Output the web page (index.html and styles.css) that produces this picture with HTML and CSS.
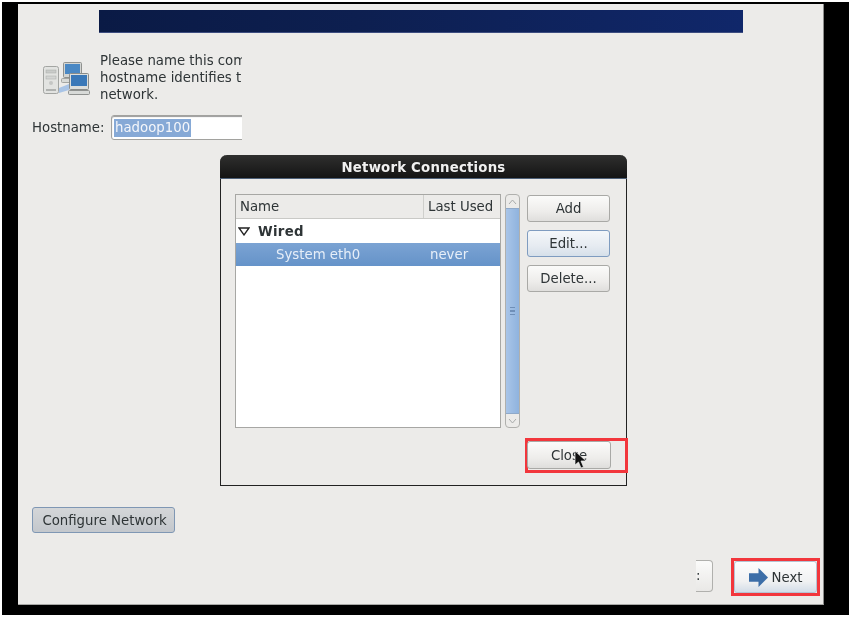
FILE: index.html
```html
<!DOCTYPE html>
<html lang="en">
<head>
    <meta charset="UTF-8">
    <title>Network Connections</title>
    <link rel="stylesheet" href="styles.css">
</head>
<body>
    <div class="frame">
        <div class="installer">
            <div class="banner"></div>

            <div class="clip-area">
                <div class="intro">
                    <svg class="net-icon" width="49" height="35" viewBox="0 0 49 35">
                        <rect x="1.500" y="5.500" width="15" height="27" rx="2" fill="#e2e3e1" stroke="#a3a5a2"/>
                        <rect x="4" y="9" width="10" height="3" fill="#c9cbc9" stroke="#a9aba9" stroke-width=".5"/>
                        <rect x="4" y="15" width="10" height="3" fill="#d3d5d3" stroke="#a9aba9" stroke-width=".5"/>
                        <circle cx="9" cy="22" r="2" fill="#c4c6c4"/>
                        <rect x="4" y="28" width="10" height="2" fill="#b0b2b0"/>
                        <path d="M17 27 L27 23 L27 29 L17 32 Z" fill="#a9c4e6"/>
                        <rect x="19.500" y="17.500" width="9" height="4" rx="1" fill="#d8dad8" stroke="#a3a5a2"/>
                        <rect x="21.500" y="1.500" width="18" height="15" rx="1" fill="#d3d5d3" stroke="#8f918f"/>
                        <rect x="23" y="3" width="15" height="10" fill="#4a88c4"/>
                        <rect x="27.500" y="12.500" width="19" height="16" rx="1" fill="#dcdedc" stroke="#8a8c8a"/>
                        <rect x="29" y="14" width="16" height="11" fill="#3a78b8"/>
                        <rect x="26.500" y="29.500" width="21" height="4" rx="1" fill="#d8dad8" stroke="#8f918f"/>
                    </svg>
                    <p class="intro-text">Please name this computer. The<br>hostname identifies this computer on a<br>network.</p>
                </div>
                <div class="host-row">
                    <label class="host-label">Hostname:</label>
                    <div class="host-input"><span class="host-value">hadoop100</span></div>
                </div>
            </div>

            <div class="spacer"></div>

            <button class="btn btn-config">Configure Network</button>

            <div class="nav-row">
                <div class="back-stub">:</div>
                <div class="mark mark-next">
                    <button class="btn btn-next">
                        <svg width="19" height="19" viewBox="0 0 20 20">
                            <path d="M0 5.500 H10 V0 L20 10 L10 20 V14.500 H0 Z" fill="#3c6ea8"/>
                        </svg>
                        Next
                    </button>
                </div>
            </div>
        </div>

        <div class="dialog">
            <div class="dialog-title">Network Connections</div>
            <div class="dialog-body">
                <div class="top-row">
                    <div class="tree">
                        <div class="tree-head">
                            <span class="col-name">Name</span>
                            <span class="col-used">Last Used</span>
                        </div>
                        <div class="tree-group">
                            <svg width="12" height="9" viewBox="0 0 12 9"><path d="M1 1 H11 L6 8 Z" fill="none" stroke="#222" stroke-width="1.300"/></svg>
                            <b class="group-name">Wired</b>
                        </div>
                        <div class="tree-row">
                            <span class="cell-name">System eth0</span>
                            <span class="cell-used">never</span>
                        </div>
                    </div>
                    <div class="scrollbar">
                        <div class="scroll-arrow">
                            <svg width="9" height="6" viewBox="0 0 9 6"><path d="M1 5 L4.500 1 L8 5" fill="none" stroke="#a9abab"/></svg>
                        </div>
                        <div class="scroll-thumb"><span class="grip"></span></div>
                        <div class="scroll-arrow">
                            <svg width="9" height="6" viewBox="0 0 9 6"><path d="M1 1 L4.500 5 L8 1" fill="none" stroke="#a9abab"/></svg>
                        </div>
                    </div>
                    <div class="side-buttons">
                        <button class="btn btn-side">Add</button>
                        <button class="btn btn-side btn-focus">Edit...</button>
                        <button class="btn btn-side">Delete...</button>
                    </div>
                </div>
                <div class="bottom-row">
                    <div class="mark mark-close">
                        <button class="btn btn-close">Close</button>
                    </div>
                </div>
            </div>
        </div>

        <svg class="cursor" width="13" height="19" viewBox="0 0 13 19">
            <path d="M1 0 L1 14 L4.500 11 L7 17 L9.500 16 L7 10 L12 10 Z" fill="#111" stroke="#eee" stroke-width=".7"/>
        </svg>
    </div>
</body>
</html>
```

FILE: styles.css
```css
html, body {
    margin: 0;
    padding: 0;
    background-color: #fff;
}
body {
    width: 851px;
    height: 618px;
    overflow: hidden;
    font-family: "DejaVu Sans", sans-serif;
    font-size: 13.3px;
    color: #2e3436;
}
/* the reference is a soft video frame */
.frame {
    position: relative;
    box-sizing: border-box;
    width: 847px;
    height: 613px;
    margin: 2px 0 0 2px;
    padding: 2px 25px 10px 16px;
    background-color: #000;
    filter: blur(.35px);
}
.installer {
    display: flex;
    flex-direction: column;
    height: 100%;
    background-color: #ecebe9;
    border-right: 1px solid #8d8d8b;
    border-bottom: 1px solid #a8a8a6;
    box-sizing: border-box;
}
.banner {
    width: 644px;
    height: 23px;
    margin: 6px 0 0 81px;
    background: linear-gradient(90deg, #0a1a45 0%, #0d1f50 40%, #10276a 100%);
    border-bottom: 1px solid #3d4d80;
    box-sizing: border-box;
}
.clip-area {
    width: 224px;
    overflow: hidden;
    margin-top: 19px;
}
.intro {
    display: flex;
    align-items: center;
    width: 500px;
    padding-left: 24px;
}
.net-icon {
    flex: none;
    margin: 2px 9px 0 0;
}
.intro-text {
    margin: 0;
    line-height: 17px;
    white-space: nowrap;
}
.host-row {
    display: flex;
    align-items: center;
    margin: 12px 0 0 14px;
}
.host-label {
    width: 79px;
    flex: none;
}
.host-input {
    flex: none;
    width: 160px;
    height: 25px;
    box-sizing: border-box;
    padding: 3px 0 0 2px;
    background-color: #fff;
    border: 1px solid #a2a29f;
    border-radius: 3px;
    box-shadow: inset 0 1px 1px #999;
}
.host-value {
    display: inline-block;
    padding: 0 1px;
    line-height: 18px;
    background-color: #86a9d6;
    color: #f4f6fa;
}
.spacer {
    flex: 1;
}
.btn {
    box-sizing: border-box;
    font-family: "DejaVu Sans", sans-serif;
    font-size: 13.3px;
    color: #2e3436;
    background: linear-gradient(180deg, #fbfbfa 0%, #eeedeb 60%, #dfdedc 100%);
    border: 1px solid #a9a9a6;
    border-radius: 3px;
    padding: 0;
}
.btn-config {
    align-self: flex-start;
    width: 143px;
    height: 26px;
    margin-left: 14px;
    padding-left: 2px;
    background: linear-gradient(180deg, #d4d6d8 0%, #c3c7cc 100%);
    border-color: #7f97b4;
}
.nav-row {
    display: flex;
    justify-content: flex-end;
    align-items: flex-start;
    margin: 25px 3px 8px 0;
}
.back-stub {
    box-sizing: border-box;
    width: 17px;
    height: 32px;
    margin: 2px 18px 0 0;
    padding-right: 13px;
    line-height: 29px;
    text-align: right;
    background: linear-gradient(180deg, #fbfbfa 0%, #e9e8e6 100%);
    border: 1px solid #b0b0ad;
    border-left: none;
    border-radius: 0 4px 4px 0;
}
.mark {
    box-sizing: border-box;
    border: 3px solid #f2363c;
}
.mark-next {
    width: 89px;
    height: 38px;
}
.btn-next {
    display: flex;
    align-items: center;
    justify-content: center;
    gap: 4px;
    width: 83px;
    height: 32px;
    background: linear-gradient(180deg, #fdfdfd 0%, #f0f1f2 65%, #d3dde8 100%);
    border-color: #b5c3d3;
}
.dialog {
    position: absolute;
    left: 218px;
    top: 153px;
    box-sizing: border-box;
    width: 407px;
    height: 331px;
    background-color: #ecebe9;
    border: 1px solid #222;
    border-top: none;
    border-radius: 7px 7px 0 0;
}
.dialog-title {
    height: 24px;
    margin: 0 -1px;
    line-height: 25px;
    text-align: center;
    font-weight: bold;
    letter-spacing: .2px;
    color: #f0f0f0;
    background: linear-gradient(180deg, #2f2f2e 0%, #141414 100%);
    border-bottom: 1px solid #4d6078;
    border-radius: 7px 7px 0 0;
    box-sizing: border-box;
}
.dialog-body {
    padding: 15px 14px 0 14px;
}
.top-row {
    display: flex;
    align-items: flex-start;
}
.tree {
    box-sizing: border-box;
    flex: none;
    width: 266px;
    height: 234px;
    background-color: #fff;
    border: 1px solid #a7a7a4;
}
.tree-head {
    display: flex;
    height: 24px;
    line-height: 24px;
    background-color: #ecebe9;
    border-bottom: 1px solid #c9c9c6;
    box-sizing: border-box;
}
.col-name {
    width: 188px;
    padding-left: 4px;
    border-right: 1px solid #cfcfcc;
    box-sizing: border-box;
}
.col-used {
    padding-left: 4px;
}
.tree-group {
    display: flex;
    align-items: center;
    gap: 8px;
    height: 24px;
    padding-left: 2px;
}
.group-name {
    letter-spacing: .3px;
}
.tree-row {
    display: flex;
    height: 23px;
    line-height: 23px;
    color: #e6eef8;
    background: linear-gradient(180deg, #7ba3d3 0%, #6593c9 100%);
}
.cell-name {
    width: 194px;
    padding-left: 40px;
    box-sizing: border-box;
}
.scrollbar {
    display: flex;
    flex-direction: column;
    flex: none;
    box-sizing: border-box;
    width: 15px;
    height: 234px;
    margin-left: 4px;
    border: 1px solid #b0b0ad;
    border-radius: 4px;
    background-color: #ecebe9;
}
.scroll-arrow {
    display: flex;
    align-items: center;
    justify-content: center;
    height: 13px;
    flex: none;
}
.scroll-thumb {
    flex: 1;
    display: flex;
    align-items: center;
    justify-content: center;
    background: linear-gradient(90deg, #a9c5e8 0%, #8fb3de 100%);
    border-top: 1px solid #8fa9c9;
    border-bottom: 1px solid #8fa9c9;
}
.grip {
    width: 5px;
    height: 6px;
    border-top: 1px solid #6f8fb8;
    border-bottom: 1px solid #6f8fb8;
    background: linear-gradient(180deg, transparent 40%, #6f8fb8 40%, #6f8fb8 60%, transparent 60%);
}
.side-buttons {
    display: flex;
    flex-direction: column;
    gap: 8px;
    margin: 1px 0 0 7px;
}
.btn-side {
    width: 83px;
    height: 27px;
}
.btn-focus {
    background: linear-gradient(180deg, #f4f7fa 0%, #e6ebf1 60%, #d6e0ea 100%);
    border-color: #7f9cc0;
}
.bottom-row {
    display: flex;
    justify-content: flex-end;
    margin: 10px -16px 0 0;
}
.mark-close {
    width: 103px;
    height: 35px;
}
.btn-close {
    display: block;
    width: 84px;
    height: 28px;
    margin-left: -1px;
}
.cursor {
    position: absolute;
    left: 572px;
    top: 449px;
}
```
